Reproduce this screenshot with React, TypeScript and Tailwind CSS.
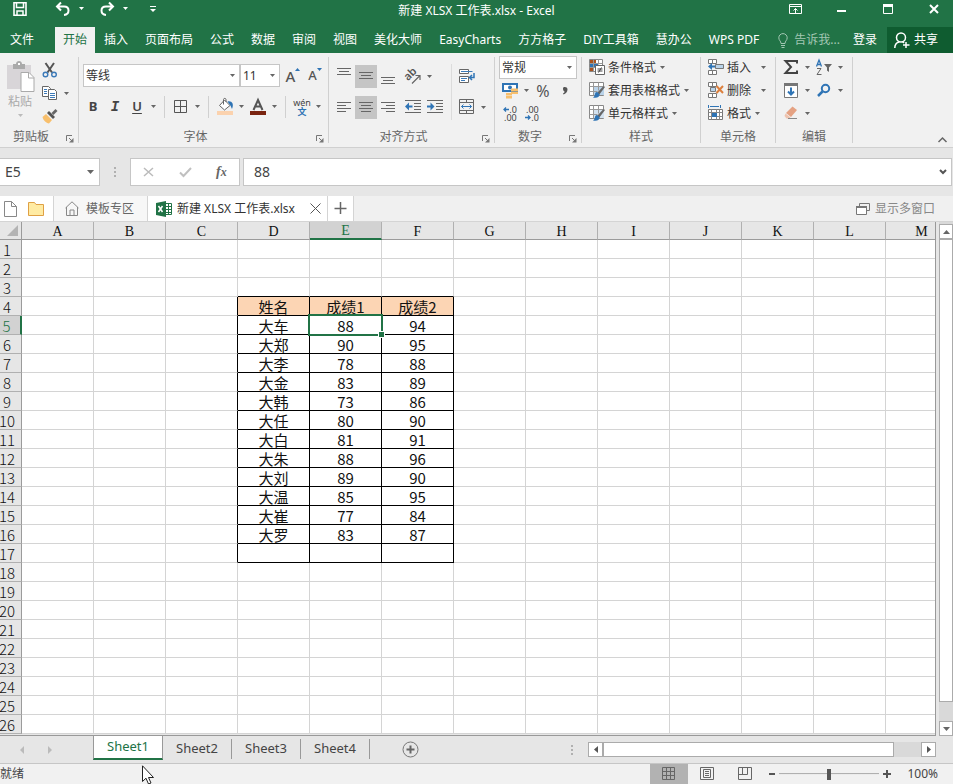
import { useState, type ReactNode } from "react";

const menuTabs = [
    "开始", "插入", "页面布局", "公式", "数据", "审阅", "视图",
    "美化大师", "EasyCharts", "方方格子", "DIY工具箱", "慧办公", "WPS PDF",
];

const columns = "ABCDEFGHIJKLM".split("");
const rowNumbers = Array.from({ length: 26 }, (_, i) => i + 1);
const sheets = ["Sheet1", "Sheet2", "Sheet3", "Sheet4"];

const scores = [
    ["姓名", "成绩1", "成绩2"],
    ["大车", "88", "94"],
    ["大郑", "90", "95"],
    ["大李", "78", "88"],
    ["大金", "83", "89"],
    ["大韩", "73", "86"],
    ["大任", "80", "90"],
    ["大白", "81", "91"],
    ["大朱", "88", "96"],
    ["大刘", "89", "90"],
    ["大温", "85", "95"],
    ["大崔", "77", "84"],
    ["大罗", "83", "87"],
    ["", "", ""],
];
const FIRST_ROW = 4;
const FIRST_COL = 3;

/* ---------- small building blocks ---------- */

const Svg = ({ w = 16, h = 17, children }: { w?: number; h?: number; children: ReactNode }) => (
    <svg width={w} height={h} viewBox={`0 0 ${w} ${h}`} fill="none" className="shrink-0 overflow-visible" aria-hidden="true">
        {children}
    </svg>
);

const Caret = ({ color = "#666" }: { color?: string }) => (
    <Svg w={5} h={3}><path d="M0 0h5L2.500 3z" fill={color} /></Svg>
);

const Btn = ({ label, active, children }: { label: string; active?: boolean; children: ReactNode }) => (
    <button
        aria-label={label}
        className={`flex h-[23px] w-[22px] shrink-0 items-center justify-center ${active ? "bg-[#c5c5c5]" : "hover:bg-[#d8d8d8]"}`}
    >
        {children}
    </button>
);

const Drop = ({ label }: { label: string }) => (
    <button aria-label={label} className="flex h-[23px] w-[11px] items-center justify-center">
        <Caret />
    </button>
);

const Sep = () => <div className="mx-[5px] h-[22px] w-px bg-[#d0d0d0]" />;

const Group = ({ title, width, launcher, children }: { title: string; width: string; launcher?: boolean; children: ReactNode }) => (
    <section aria-label={title} className={`flex shrink-0 ${width}`}>
        <div className="flex min-w-0 flex-1 flex-col">
            <div className="h-[74px]">{children}</div>
            <div className="flex h-5 items-center text-[#666]">
                <span className="flex-1 text-center">{title}</span>
                {launcher && (
                    <button aria-label={`${title}设置`} className="flex h-5 w-4 items-center justify-center pt-1">
                        <Svg w={8} h={8}>
                            <path d="M.5 6V.5H6" stroke="#777" />
                            <path d="M3 3l3 3" stroke="#777" />
                            <path d="M7.500 3v4.500H3z" fill="#777" />
                        </Svg>
                    </button>
                )}
            </div>
        </div>
        <div className="mt-1 h-[86px] w-px bg-[#d0d0d0]" />
    </section>
);

const Combo = ({ label, value, width }: { label: string; value: string; width: string }) => (
    <div className={`relative h-[23px] ${width}`}>
        <select aria-label={label} className="h-full w-full appearance-none border border-[#c6c6c6] bg-white pl-0.5 text-[#333] outline-none">
            <option>{value}</option>
        </select>
        <span className="pointer-events-none absolute top-2.5 right-[5px]"><Caret /></span>
    </div>
);

const TextBtn = ({ icon, text, wide }: { icon: ReactNode; text: string; wide?: boolean }) => (
    <button className="flex h-[23px] items-center text-[#333]">
        {icon}
        <span className="ml-[3px]">{text}</span>
        <span className={wide ? "ml-2.5" : "ml-1"}><Caret /></span>
    </button>
);

const lines = (rows: number[][]) => rows.map(([x1, x2, y]) => (
    <path key={y} d={`M${x1} ${y}.5H${x2}`} stroke="#666" />
));

/* ---------- ribbon icons ---------- */

const SheetPattern = ({ fill }: { fill: string }) => (
    <>
        <path d="M.5 .5h14v13H.5z" fill="#fff" stroke="#888" />
        <path d="M4 4h11v9H4z" fill={fill} />
        <path d="M.5 4.500h14M.5 9.500h8M4.500 .5v13M9.500 .5v8" stroke="#999" />
        <path d="M14.500 4l1.500 1-6 8-2-2z" fill="#666" />
        <path d="M8 10c-3 0-1 4-4 5.500 4 .8 7-.5 6.500-3.500z" fill="#2f74b5" />
    </>
);

const CellBlocks = ({ children }: { children: ReactNode }) => (
    <Svg>
        <path d="M.5 .5h4v4h-4zM4.500 .5h4v4h-4zM.5 11.500h4v4h-4zM4.500 11.500h4v4h-4z" fill="#fff" stroke="#777" />
        {children}
    </Svg>
);

const ClipboardGroup = () => (
    <Group title="剪贴板" width="w-[79px]" launcher>
        <div className="flex pt-1.5">
            <button className="flex w-9 flex-col items-center pt-0.5 pl-1 text-[#aaa]">
                <Svg w={29} h={31}>
                    <path d="M1 4h24v24H1z" fill="#d8d5d8" />
                    <path d="M7 3h3c0-4 6-4 6 0h3v5H7z" fill="#aaa" />
                    <path d="M12 2h2v2h-2z" fill="#fff" />
                    <path d="M15 11.500h8l5 5v14H15z" fill="#fff" stroke="#aaa" />
                    <path d="M22.500 11.500v5.500H28" stroke="#aaa" />
                </Svg>
                <span className="mt-0.5 leading-4">粘贴</span>
                <span className="mt-1"><Caret color="#bbb" /></span>
            </button>
            <div className="ml-[3px] flex flex-col">
                <Btn label="剪切">
                    <Svg>
                        <path d="M3.500 1L10 10.500M12 1L5.500 10.500" stroke="#555" strokeWidth="2" />
                        <circle cx="3.500" cy="12.500" r="2.300" stroke="#3c7ab8" strokeWidth="1.400" />
                        <circle cx="12" cy="12.500" r="2.300" stroke="#3c7ab8" strokeWidth="1.400" />
                    </Svg>
                </Btn>
                <div className="flex">
                    <Btn label="复制">
                        <Svg>
                            <path d="M.5 1.500h6l2 2v8h-8z" fill="#fff" stroke="#666" />
                            <path d="M6.500 4.500h6l2 2v8h-8z" fill="#fff" stroke="#666" />
                            <path d="M2 4.500h3M2 6.500h3M2 8.500h3M8 8.500h5M8 10.500h5M8 12.500h5" stroke="#3c7ab8" />
                        </Svg>
                    </Btn>
                    <Drop label="复制选项" />
                </div>
                <Btn label="格式刷">
                    <Svg>
                        <path d="M13.500 1l2 2-4 4-2-2z" fill="#666" />
                        <path d="M7 3l6 6-2 2-6-6z" fill="#555" />
                        <path d="M4 6l6 6-3 3.500C4 15 1 12 .5 9z" fill="#f8bf6c" />
                    </Svg>
                </Btn>
            </div>
        </div>
    </Group>
);

const FontGroup = () => (
    <Group title="字体" width="w-[250px]" launcher>
        <div className="flex flex-col gap-2 pt-[11px] pl-[3px]">
            <div className="flex">
                <div className="flex pl-px">
                    <Combo label="字体" value="等线" width="w-[157px]" />
                    <Combo label="字号" value="11" width="w-10" />
                </div>
                <span className="ml-0.5 flex">
                    <Btn label="增大字号">
                        <span className="text-[15px] font-medium text-[#555]">A</span>
                        <span className="mb-3"><Svg w={5} h={3}><path d="M0 3h5L2.500 0z" fill="#2f74b5" /></Svg></span>
                    </Btn>
                    <Btn label="减小字号">
                        <span className="text-[13px] font-medium text-[#555]">A</span>
                        <span className="mb-3"><Svg w={5} h={3}><path d="M0 0h5L2.500 3z" fill="#2f74b5" /></Svg></span>
                    </Btn>
                </span>
            </div>
            <div className="flex items-center text-[#444]">
                <Btn label="加粗"><span className="text-[13px] font-bold">B</span></Btn>
                <Btn label="倾斜"><span className="font-['Liberation_Mono',monospace] text-sm font-bold italic">I</span></Btn>
                <Btn label="下划线"><span className="text-[13px] font-semibold underline underline-offset-2">U</span></Btn>
                <Drop label="下划线选项" />
                <Sep />
                <Btn label="边框">
                    <Svg w={14} h={13}><path d="M.5 .5h12v12H.5zM6.500 .5v12M.5 6.500h12" stroke="#555" /></Svg>
                </Btn>
                <Drop label="边框选项" />
                <Sep />
                <Btn label="填充颜色">
                    <Svg>
                        <path d="M7.500 2L13 7.500 7.500 12 2.500 7.500z" fill="#fff" stroke="#666" />
                        <path d="M6.500 6.500V1.500c0-1.500 2.500-1.500 2.500 0V4" stroke="#666" />
                        <path d="M10.500 3.500c4-1 7 2 4.500 7.500-1-2-1-3-2-4z" fill="#2f74b5" />
                        <path d="M0 13h16v4H0z" fill="#fbd2ae" />
                    </Svg>
                </Btn>
                <Drop label="填充颜色选项" />
                <Btn label="字体颜色">
                    <Svg>
                        <path d="M3.500 12L8 2l4.500 10M5 8.500h6" stroke="#555" strokeWidth="2" />
                        <path d="M0 13h16v4H0z" fill="#7a2410" />
                    </Svg>
                </Btn>
                <Drop label="字体颜色选项" />
                <Sep />
                <Btn label="拼音指南">
                    <span className="flex flex-col items-center text-[9px] leading-[9px]">
                        <span>wén</span>
                        <span className="font-bold text-[#2f74b5]">文</span>
                    </span>
                </Btn>
                <Drop label="拼音选项" />
            </div>
        </div>
    </Group>
);

const AlignGroup = () => (
    <Group title="对齐方式" width="w-[166px]" launcher>
        <div className="flex items-center pt-[11px] pl-1">
            <div className="flex flex-col gap-2">
                <div className="flex">
                    <Btn label="顶端对齐"><Svg>{lines([[1, 15, 0], [3, 13, 3], [1, 15, 6]])}</Svg></Btn>
                    <Btn label="垂直居中" active><Svg>{lines([[1, 15, 4], [3, 13, 7], [1, 15, 10]])}</Svg></Btn>
                    <Btn label="底端对齐"><Svg>{lines([[1, 15, 9], [3, 13, 12], [1, 15, 15]])}</Svg></Btn>
                    <span className="ml-[3px] flex">
                        <Btn label="方向">
                            <Svg>
                                <path d="M7 15.500L14.500 8M10.500 7.500H15V12" stroke="#666" strokeWidth="1.200" />
                                <text x="-1" y="10" fontSize="11" fontWeight="600" fill="#555" transform="rotate(-45 5 7)">ab</text>
                            </Svg>
                        </Btn>
                        <Drop label="方向选项" />
                    </span>
                </div>
                <div className="flex">
                    <Btn label="左对齐"><Svg>{lines([[1, 15, 3], [1, 10, 6], [1, 15, 9], [1, 10, 12]])}</Svg></Btn>
                    <Btn label="居中" active><Svg>{lines([[1, 15, 3], [3, 13, 6], [1, 15, 9], [3, 13, 12]])}</Svg></Btn>
                    <Btn label="右对齐"><Svg>{lines([[1, 15, 3], [6, 15, 6], [1, 15, 9], [6, 15, 12]])}</Svg></Btn>
                    <span className="ml-[3px] flex">
                        <Btn label="减少缩进量">
                            <Svg>
                                {lines([[0, 16, 1], [9, 16, 4], [9, 16, 7], [9, 16, 10], [0, 16, 13]])}
                                <path d="M0 7.500L4 3.500v3h3.500v2H4v3z" fill="#2f74b5" />
                            </Svg>
                        </Btn>
                        <Btn label="增加缩进量">
                            <Svg>
                                {lines([[0, 16, 1], [9, 16, 4], [9, 16, 7], [9, 16, 10], [0, 16, 13]])}
                                <path d="M7.500 7.500L3.500 3.500v3H0v2h3.500v3z" fill="#2f74b5" />
                            </Svg>
                        </Btn>
                    </span>
                </div>
            </div>
            <div className="mr-1 ml-[5px] h-14 w-px bg-[#dcdcdc]" />
            <div className="flex flex-col gap-2">
                <Btn label="自动换行">
                    <Svg>
                        <path d="M.5 1.500h9v4h-9zM.5 8.500h9v6h-9z" fill="#fff" stroke="#666" />
                        <path d="M2 3.500h11.500M2 10.500h6M2 12.500h4" stroke="#3c7ab8" />
                        <path d="M15 5v4.500h-4M13 7l-2.500 2.500L13 12" stroke="#2f74b5" strokeWidth="1.500" />
                    </Svg>
                </Btn>
                <div className="flex">
                    <Btn label="合并后居中">
                        <Svg>
                            <path d="M.5 .5h14v14H.5zM.5 3.500h14M.5 11.500h14M7.500 .5v3M7.500 11.500v3" stroke="#666" />
                            <path d="M2.500 7.500h10M4.500 5.500l-2 2 2 2M10.500 5.500l2 2-2 2" stroke="#2f74b5" />
                        </Svg>
                    </Btn>
                    <Drop label="合并选项" />
                </div>
            </div>
        </div>
    </Group>
);

const NumberGroup = () => (
    <Group title="数字" width="w-[87px]" launcher>
        <div className="flex flex-col pt-[3px] pl-1">
            <Combo label="数字格式" value="常规" width="w-[78px]" />
            <div className="flex text-[#555]">
                <Btn label="会计数字格式">
                    <Svg>
                        <path d="M0 1h16v9H0z" fill="#2f74b5" />
                        <path d="M2 3h12v5H2z" fill="#fff" />
                        <circle cx="8" cy="5.500" r="2" fill="#2f74b5" />
                        <path d="M9 6.500h7v2.500H9zM9 9.500h7V12H9zM4 11h6v2.500H4zM4 14h6v2.500H4z" fill="#f8bf6c" />
                    </Svg>
                </Btn>
                <Drop label="会计格式选项" />
                <Btn label="百分比样式"><span className="text-base">%</span></Btn>
                <Btn label="千位分隔样式">
                    <Svg w={6} h={8}><path d="M1 1.500C1-.5 5.500-.5 5.500 2.500 5.500 5 3.500 7 1.500 7.500L1 6.500c1-.5 1.500-1 1.500-2C1.500 4 1 3 1 1.500z" fill="#555" /></Svg>
                </Btn>
            </div>
            <div className="flex text-[#444]">
                <Btn label="增加小数位数">
                    <span className="flex flex-col items-end text-[9px] leading-[8px]">
                        <span className="flex items-center"><Svg w={6} h={5}><path d="M6 2.500H1M3 .5l-2 2 2 2" stroke="#2f74b5" strokeWidth="1.300" /></Svg>.0</span>
                        <span>.00</span>
                    </span>
                </Btn>
                <Btn label="减少小数位数">
                    <span className="flex flex-col items-end text-[9px] leading-[8px]">
                        <span>.00</span>
                        <span className="flex items-center"><Svg w={6} h={5}><path d="M0 2.500h5M3 .5l2 2-2 2" stroke="#2f74b5" strokeWidth="1.300" /></Svg>.0</span>
                    </span>
                </Btn>
            </div>
        </div>
    </Group>
);

const StyleGroup = () => (
    <Group title="样式" width="w-[119px]">
        <div className="flex flex-col items-start pt-[3px] pl-[7px]">
            <TextBtn
                text="条件格式"
                icon={
                    <Svg>
                        <path d="M.5 .5h13v12H.5z" fill="#fff" stroke="#888" />
                        <path d="M1 1h6v3H1zM1 9h4v3H1z" fill="#a9531f" />
                        <path d="M1 5h8v3H1z" fill="#2f74b5" />
                        <path d="M4.500 .5v12M9.500 .5v5M.5 4.500h13M.5 8.500h6" stroke="#999" />
                        <path d="M6.500 6.500h9v9h-9z" fill="#fff" stroke="#666" />
                        <path d="M8.500 10h5M8.500 12h5M12.500 8.500l-3 5" stroke="#444" />
                    </Svg>
                }
            />
            <TextBtn text="套用表格格式" icon={<Svg><SheetPattern fill="#b9d3ea" /></Svg>} />
            <TextBtn text="单元格样式" icon={<Svg><SheetPattern fill="#d3e2f0" /></Svg>} />
        </div>
    </Group>
);

const CellsGroup = () => (
    <Group title="单元格" width="w-[75px]">
        <div className="flex flex-col items-start pt-[3px] pl-[7px]">
            <TextBtn
                text="插入"
                wide
                icon={
                    <CellBlocks>
                        <path d="M7.500 5.500h8v4h-8z" fill="#b9d3ea" stroke="#777" />
                        <path d="M0 7.500L4 4v2.500h3v2H4V11z" fill="#2f74b5" />
                    </CellBlocks>
                }
            />
            <TextBtn
                text="删除"
                wide
                icon={
                    <CellBlocks>
                        <path d="M2.500 5.500h5v4h-5z" fill="#b9d3ea" stroke="#777" />
                        <path d="M8.500 4l6.500 7M15 4l-6.500 7" stroke="#dc7f3c" strokeWidth="2" />
                    </CellBlocks>
                }
            />
            <TextBtn
                text="格式"
                icon={
                    <Svg>
                        <path d="M.5 0v3M12.500 0v3M2 1.500h9" stroke="#2f74b5" />
                        <path d="M.5 4.500h14v10H.5z" fill="#fff" stroke="#777" />
                        <path d="M.5 7.500h14M.5 11.500h14M3.500 4.500v10M8.500 4.500v10M11.500 4.500v10" stroke="#888" />
                        <path d="M4 8h5v4H4z" fill="#2f74b5" />
                    </Svg>
                }
            />
        </div>
    </Group>
);

const EditGroup = () => (
    <Group title="编辑" width="w-[77px]">
        <div className="flex flex-col pt-[3px] pl-1">
            <div className="flex">
                <Btn label="自动求和">
                    <Svg><path d="M14 4.500V2H2.500L8 8l-5.500 6H14v-2.500" stroke="#444" strokeWidth="2" /></Svg>
                </Btn>
                <Drop label="求和选项" />
                <Btn label="排序和筛选">
                    <Svg>
                        <path d="M.5 7.500L3 1l2.500 6.500M1.500 5.500h3" stroke="#2f74b5" strokeWidth="1.300" />
                        <path d="M1 9.500h4L1 15.500h4.500" stroke="#666" />
                        <path d="M8 5h8l-3 3.500V13l-2-1.500v-3z" fill="#666" />
                    </Svg>
                </Btn>
                <Drop label="排序选项" />
            </div>
            <div className="flex">
                <Btn label="填充">
                    <Svg w={14}>
                        <path d="M.5 1.500h13v14H.5z" fill="#fff" stroke="#777" />
                        <path d="M0 1h14v3H0z" fill="#777" />
                        <path d="M7 5.500v7M4 9.500l3 3 3-3" stroke="#2f74b5" strokeWidth="2" />
                    </Svg>
                </Btn>
                <Drop label="填充选项" />
                <Btn label="查找和选择">
                    <Svg w={14} h={13}>
                        <circle cx="8.500" cy="4.500" r="3.700" stroke="#2f74b5" strokeWidth="2" />
                        <path d="M5.500 7.500L1 12" stroke="#2f74b5" strokeWidth="2.500" />
                    </Svg>
                </Btn>
                <Drop label="查找选项" />
            </div>
            <div className="flex">
                <Btn label="清除">
                    <Svg>
                        <path d="M9.500 1.500L14 5l-6 7-5-4z" fill="#e5a283" />
                        <path d="M2.500 8.500l5 4L6 13.500H3.500L1.500 11z" fill="#eec3ae" />
                        <path d="M5 13.500h9" stroke="#888" />
                    </Svg>
                </Btn>
                <Drop label="清除选项" />
            </div>
        </div>
    </Group>
);

/* ---------- top area ---------- */

const TitleBar = () => (
    <header className="grid h-[27px] grid-cols-[1fr_auto_1fr] bg-[#217346] text-white">
        <div className="flex items-start pt-0.5 pl-[13px]">
            <button aria-label="保存">
                <Svg w={14} h={14}>
                    <path d="M1 .8h12v12.400H1z" stroke="#fff" strokeWidth="1.600" />
                    <path d="M3.500 1v4.500h7V1M4 13.500V9h6v4.500" stroke="#fff" strokeWidth="1.500" />
                </Svg>
            </button>
            <button aria-label="撤消" className="ml-7">
                <Svg w={17} h={14}><path d="M6 .5L2 4.500l4 4M2.500 4.500H9c6 0 6 8 0 8.500" stroke="#fff" strokeWidth="2" /></Svg>
            </button>
            <button aria-label="撤消选项" className="mt-[5px] ml-[7px]"><Caret color="#fff" /></button>
            <button aria-label="恢复" className="ml-[15px]">
                <Svg w={17} h={14}><path d="M10 .5l4 4-4 4M13.500 4.500H7c-6 0-6 8 0 8.500" stroke="#fff" strokeWidth="2" /></Svg>
            </button>
            <button aria-label="恢复选项" className="mt-[5px] ml-[7px]"><Caret color="#fff" /></button>
            <button aria-label="自定义快速访问工具栏" className="mt-1 ml-[22px]">
                <Svg w={6} h={7}><path d="M0 .5h6" stroke="#fff" /><path d="M0 3h6L3 6z" fill="#fff" /></Svg>
            </button>
        </div>
        <h1 className="leading-[22px]">新建 XLSX 工作表.xlsx - Excel</h1>
        <div className="flex items-start justify-end pt-1 pr-3.5">
            <button aria-label="功能区显示选项" className="mr-[34px]">
                <Svg w={14} h={10}>
                    <path d="M.5 .5h12v9H.5zM.5 2.500h12" stroke="#fff" />
                    <path d="M6.500 9V4.500M4.500 6.500l2-2 2 2" stroke="#fff" />
                </Svg>
            </button>
            <button aria-label="最小化" className="mt-1.5 mr-[37px]"><Svg w={9} h={2}><path d="M0 0h9v2H0z" fill="#fff" /></Svg></button>
            <button aria-label="最大化" className="mr-9">
                <Svg w={10} h={10}><path d="M.5 .5h9v9h-9z" stroke="#fff" /><path d="M0 0h10v3H0z" fill="#fff" /></Svg>
            </button>
            <button aria-label="关闭"><Svg w={10} h={10}><path d="M1 1l8 8M9 1L1 9" stroke="#fff" strokeWidth="2" /></Svg></button>
        </div>
    </header>
);

const MenuTabs = () => (
    <nav className="flex h-[26px] items-stretch gap-px bg-[#217346] whitespace-nowrap text-white">
        <button className="w-[54px] shrink-0 pl-2.5 text-left">文件</button>
        {menuTabs.map((tab) => (
            <button key={tab} className={`shrink-0 px-2 ${tab === "开始" ? "bg-[#f1f1f1] text-[#217346]" : ""}`}>{tab}</button>
        ))}
        <button className="ml-2.5 flex items-center gap-1.5 text-[#a3c7b3]">
            <Svg w={10} h={15}>
                <path d="M3 10.500C3 8 .8 7.500 .8 4.800a4.200 4.200 0 0 1 8.400 0C9.200 7.500 7 8 7 10.500zM3 12.500h4M3.500 14.500h3" stroke="#a3c7b3" />
            </Svg>
            告诉我...
        </button>
        <button className="ml-auto px-[9px]">登录</button>
        <button className="flex shrink-0 items-center gap-1 bg-[#0f5c30] pr-[15px] pl-[7px]">
            <Svg w={16}>
                <circle cx="7" cy="5.500" r="4.500" stroke="#fff" strokeWidth="1.500" />
                <path d="M.8 16c0-3.500 2-5.500 4.500-6M8.500 10c.8.200 1 .5 1.500 1M12 10v6M9 13h6.500" stroke="#fff" strokeWidth="1.500" />
            </Svg>
            共享
        </button>
    </nav>
);

const Ribbon = () => (
    <div className="flex h-[95px] border-b border-[#d0d0d0] bg-[#f1f1f1]">
        <ClipboardGroup />
        <FontGroup />
        <AlignGroup />
        <NumberGroup />
        <StyleGroup />
        <CellsGroup />
        <EditGroup />
        <button aria-label="折叠功能区" className="mr-1.5 mb-1 ml-auto self-end">
            <Svg w={9} h={6}><path d="M.5 5l4-4 4 4" stroke="#666" strokeWidth="1.500" /></Svg>
        </button>
    </div>
);

const FormulaBar = () => (
    <div className="flex h-12 bg-[#e6e6e6] pt-2.5 pr-px text-[#444]">
        <div className="flex h-7 w-[100px] items-center border border-l-0 border-[#c6c6c6] bg-white">
            <input aria-label="名称框" defaultValue="E5" className="w-full min-w-0 pl-[5px] text-sm outline-none" />
            <button aria-label="名称列表" className="mr-[5px]"><Svg w={7} h={4}><path d="M0 0h7L3.500 4z" fill="#666" /></Svg></button>
        </div>
        <div className="flex h-7 w-[30px] items-center justify-center">
            <Svg w={2} h={10}><path d="M0 0h2v2H0zM0 4h2v2H0zM0 8h2v2H0z" fill="#b0b0b0" /></Svg>
        </div>
        <div className="flex h-7 w-[110px] items-center justify-around border border-[#c6c6c6] bg-white">
            <button aria-label="取消"><Svg w={11} h={10}><path d="M1 1l9 8M10 1L1 9" stroke="#bbb" strokeWidth="1.500" /></Svg></button>
            <button aria-label="输入"><Svg w={13} h={10}><path d="M1 5.500L4.500 9 12 1" stroke="#c0c0c0" strokeWidth="2" /></Svg></button>
            <button aria-label="插入函数" className="font-['Liberation_Serif',serif] text-sm leading-5 font-bold text-[#666] italic">
                f<span className="text-xs">x</span>
            </button>
        </div>
        <div className="ml-[3px] flex h-7 min-w-0 flex-1 items-center border border-[#c6c6c6] bg-white">
            <input aria-label="编辑栏" defaultValue="88" className="min-w-0 flex-1 pl-2.5 text-sm outline-none" />
            <button aria-label="展开编辑栏" className="mr-1"><Svg w={8} h={6}><path d="M1 1l3 3 3-3" stroke="#555" strokeWidth="2" /></Svg></button>
        </div>
    </div>
);

const WorkbookTabs = () => (
    <div className="flex h-[26px] items-stretch border-b border-[#d4d4d4] bg-[#f0f0f0] text-[#666]">
        <div className="flex w-[54px] items-center gap-[11px] border-r border-[#d4d4d4] bg-white pl-1">
            <button aria-label="新建">
                <Svg w={13} h={16}><path d="M.5 .5h7l5 5v10H.5zM7.500 .5v5h5" stroke="#888" /></Svg>
            </button>
            <button aria-label="打开">
                <Svg w={16} h={14}><path d="M.5 .5h6l1.500 2h7.500v11H.5z" fill="#ffeba3" stroke="#dfa044" /></Svg>
            </button>
        </div>
        <button className="flex w-[94px] items-center gap-[7px] border-r border-[#d4d4d4] bg-[#f7f7f7] pl-[11px]">
            <Svg w={14} h={15}><path d="M.5 7L7 .8 13.500 7M1.500 6v8.500h11V6M5 14V9h4v5" stroke="#888" /></Svg>
            模板专区
        </button>
        <div className="flex w-[180px] items-center border-r border-[#d4d4d4] bg-white pl-2 whitespace-nowrap text-[#333]">
            <Svg w={16} h={16}>
                <path d="M8 2.500h7.500v11H8z" fill="#fff" stroke="#217346" />
                <path d="M9 5.500h6M9 8.500h6M9 11.500h6M12.500 3v10" stroke="#217346" />
                <path d="M0 2l10-2v16L0 14z" fill="#217346" />
                <path d="M2.500 5l4 6M6.500 5l-4 6" stroke="#fff" strokeWidth="1.500" />
            </Svg>
            <span className="ml-[5px] flex-1">新建 XLSX 工作表.xlsx</span>
            <button aria-label="关闭工作簿" className="mr-1.5">
                <Svg w={11} h={11}><path d="M.5 .5l10 10M10.500 .5l-10 10" stroke="#555" /></Svg>
            </button>
        </div>
        <button aria-label="新建标签" className="flex w-[26px] items-center justify-center border-r border-[#d4d4d4] bg-white">
            <Svg w={13} h={13}><path d="M6.500 0v12M.5 6.500h12" stroke="#666" strokeWidth="1.500" /></Svg>
        </button>
        <button className="mr-[18px] ml-auto flex items-center gap-[5px] text-[#888]">
            <Svg w={14} h={12}>
                <path d="M3.500 3V.5h10v7H11" stroke="#777" />
                <path d="M.5 3.500h10v8H.5z" fill="#fff" stroke="#777" /><path d="M0 3h11v2H0z" fill="#777" />
            </Svg>
            显示多窗口
        </button>
    </div>
);

/* ---------- sheet ---------- */

function cellStyle(row: number, col: number) {
    const r = row - FIRST_ROW;
    const c = col - FIRST_COL;
    const inRows = r >= 0 && r < scores.length;
    const inCols = c >= 0 && c < 3;
    const right = inRows && c >= -1 && c < 3 ? "border-r-black" : "border-r-[#d4d4d4]";
    const bottom = inCols && r >= -1 && r < scores.length ? "border-b-black" : "border-b-[#d4d4d4]";
    const bg = inRows && inCols && r === 0 ? "bg-[#fcd5b4]" : "bg-white";
    return `${right} ${bottom} ${bg}`;
}

const Grid = () => (
    <div className="flex bg-[#e6e6e6]">
        <div className="min-w-0 flex-1 overflow-hidden border-r border-b border-[#999] pb-px">
            <table className="w-[958px] table-fixed border-separate border-spacing-0 text-center font-['Noto_Sans_CJK_SC',sans-serif] text-[15px] text-[#111]">
                <colgroup>
                    <col className="w-[22px]" />
                    {columns.map((c) => <col key={c} className="w-[72px]" />)}
                </colgroup>
                <thead className="font-['Liberation_Serif',serif]">
                    <tr className="h-[18px]">
                        <th aria-label="全选" className="border-r border-b border-[#9b9b9b] p-0">
                            <span className="flex h-[17px] items-center justify-end pr-[3px]">
                                <Svg w={11} h={11}><path d="M11 0v11H0z" fill="#b4b4b4" /></Svg>
                            </span>
                        </th>
                        {columns.map((c) => (
                            <th
                                key={c}
                                className={`border-r border-r-[#b0b0b0] p-0 pt-0.5 text-sm leading-[14px] font-normal ${c === "E" ? "border-b-2 border-b-[#217346] bg-[#d2d2d2] text-[#217346]" : "border-b border-b-[#9b9b9b]"}`}
                            >
                                {c}
                            </th>
                        ))}
                    </tr>
                </thead>
                <tbody>
                    {rowNumbers.map((n) => (
                        <tr key={n} className="h-[19px]">
                            <th
                                className={`border-b border-b-[#b0b0b0] p-0 pt-px pr-[7px] leading-[17px] font-light ${n === 5 ? "border-r-2 border-r-[#217346] bg-[#d2d2d2] text-[#217346]" : "border-r border-r-[#9b9b9b]"}`}
                            >
                                <span className="flex justify-center">{n}</span>
                            </th>
                            {columns.map((c, i) => (
                                <td key={c} className={`relative border-r border-b p-0 pt-px leading-[17px] ${cellStyle(n, i)}`}>
                                    {scores[n - FIRST_ROW]?.[i - FIRST_COL]}
                                    {n === 5 && c === "E" && (
                                        <span className="absolute -inset-[2px] z-10 border-2 border-[#217346]">
                                            <span className="absolute -right-[4px] -bottom-[4px] size-[7px] border border-white bg-[#217346]" />
                                        </span>
                                    )}
                                </td>
                            ))}
                        </tr>
                    ))}
                </tbody>
            </table>
        </div>
        <div className="ml-[3px] flex w-3.5 flex-col bg-[#d9d9d9] pt-0.5">
            <button aria-label="向上滚动" className="flex h-[15px] items-center justify-center border border-[#ababab] bg-white">
                <Svg w={7} h={4}><path d="M0 4h7L3.500 0z" fill="#666" /></Svg>
            </button>
            <div className="mb-[19px] flex-1 border border-[#ababab] bg-white" />
            <button aria-label="向下滚动" className="flex h-[15px] items-center justify-center border border-[#ababab] bg-white">
                <Svg w={7} h={4}><path d="M0 0h7L3.500 4z" fill="#666" /></Svg>
            </button>
        </div>
    </div>
);

const SheetBar = () => {
    const [active, setActive] = useState("Sheet1");
    return (
        <div className="flex h-7 items-stretch border-b border-[#c6c6c6] bg-[#e6e6e6]">
            <div className="flex w-[93px] items-center gap-6 pl-5">
                <button aria-label="上一张"><Svg w={4} h={8}><path d="M4 0v8L0 4z" fill="#bbb" /></Svg></button>
                <button aria-label="下一张"><Svg w={4} h={8}><path d="M0 0v8l4-4z" fill="#bbb" /></Svg></button>
            </div>
            {sheets.map((s) => (
                <button
                    key={s}
                    onClick={() => setActive(s)}
                    className={`text-[13px] ${s === active
                        ? "mb-[3px] w-[70px] border-x border-b-2 border-x-[#999] border-b-[#217346] bg-white text-[#217346]"
                        : "mt-[3px] mb-1 w-[69px] border-r border-[#999] pb-px text-[#444]"}`}
                >
                    {s}
                </button>
            ))}
            <button aria-label="新工作表" className="ml-8">
                <Svg w={17} h={17}><circle cx="8.500" cy="8.500" r="7.500" stroke="#777" /><path d="M8.500 4.500v8M4.500 8.500h8" stroke="#666" strokeWidth="2" /></Svg>
            </button>
            <div className="mr-[17px] ml-auto flex w-[365px] items-center gap-[15px]">
                <Svg w={2} h={10}><path d="M0 0h2v2H0zM0 4h2v2H0zM0 8h2v2H0z" fill="#b0b0b0" /></Svg>
                <div className="flex h-[15px] flex-1 bg-[#d9d9d9]">
                    <button aria-label="向左滚动" className="flex w-[15px] items-center justify-center border border-[#ababab] bg-white">
                        <Svg w={4} h={7}><path d="M4 0v7L0 3.500z" fill="#555" /></Svg>
                    </button>
                    <div className="mr-[27px] flex-1 border border-[#ababab] bg-white" />
                    <button aria-label="向右滚动" className="flex w-[15px] items-center justify-center border border-[#ababab] bg-white">
                        <Svg w={4} h={7}><path d="M0 0v7l4-3.500z" fill="#555" /></Svg>
                    </button>
                </div>
            </div>
        </div>
    );
};

const StatusBar = () => (
    <footer className="flex h-5 items-center bg-[#f1f1f1] text-[#444]">
        <span>就绪</span>
        <div className="ml-auto flex h-full items-center">
            <button aria-label="普通视图" className="flex h-full w-[38px] items-center justify-center bg-[#b2b2b2]">
                <Svg w={14} h={14}><path d="M.5 .5h12v12H.5zM4.500 .5v12M8.500 .5v12M.5 4.500h12M.5 8.500h12" stroke="#666" /></Svg>
            </button>
            <button aria-label="页面布局视图" className="flex h-full w-[38px] items-center justify-center">
                <Svg w={14} h={14}><path d="M.5 .5h13v12H.5zM3.500 2.500h7v8h-7zM5 4.500h4M5 6.500h4M5 8.500h4" stroke="#666" /></Svg>
            </button>
            <button aria-label="分页预览" className="flex h-full w-[38px] items-center justify-center">
                <Svg w={14} h={14}><path d="M.5 .5h13v12H.5zM4.500 .5v7M9.500 .5v7M.5 7.500h9" stroke="#666" /></Svg>
            </button>
            <button aria-label="缩小" className="ml-[5px]"><Svg w={6} h={2}><path d="M0 0h6v2H0z" fill="#555" /></Svg></button>
            <input
                type="range"
                aria-label="显示比例"
                min={0}
                max={100}
                defaultValue={50}
                className="mx-1 h-3 w-[100px] appearance-none bg-linear-to-b from-transparent from-45% via-[#aaa] via-45% to-transparent to-55% [&::-webkit-slider-thumb]:h-[11px] [&::-webkit-slider-thumb]:w-1 [&::-webkit-slider-thumb]:appearance-none [&::-webkit-slider-thumb]:bg-[#555]"
            />
            <button aria-label="放大"><Svg w={8} h={8}><path d="M4 0v8M0 4h8" stroke="#555" strokeWidth="2" /></Svg></button>
            <span className="mr-[15px] ml-4">100%</span>
        </div>
    </footer>
);

export default function App() {
    return (
        <div className="relative min-h-screen overflow-hidden bg-[#f1f1f1] font-['Noto_Sans','Noto_Sans_CJK_SC',sans-serif] text-xs">
            <TitleBar />
            <MenuTabs />
            <Ribbon />
            <FormulaBar />
            <WorkbookTabs />
            <Grid />
            <SheetBar />
            <StatusBar />
            {/* mouse pointer */}
            <div className="pointer-events-none absolute top-[765px] left-[142px]">
                <Svg w={13} h={20}>
                    <path d="M.5 .8v15.700l3.500-3.300 2.500 5.800 2.500-1-2.500-5.500h5z" fill="#fff" stroke="#222" />
                </Svg>
            </div>
        </div>
    );
}
